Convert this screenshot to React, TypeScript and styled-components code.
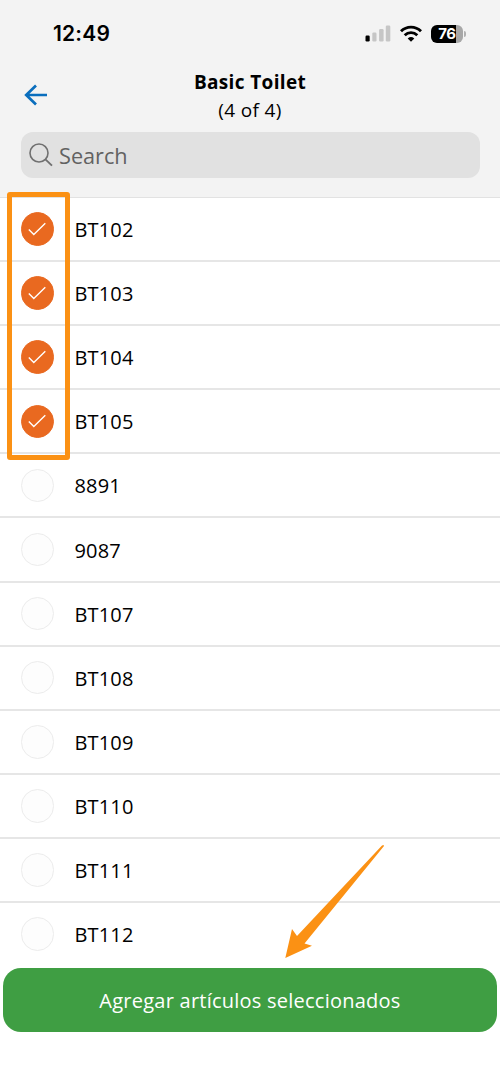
import React from 'react';
import styled, { createGlobalStyle } from 'styled-components';

const GlobalStyle = createGlobalStyle`
  *, *::before, *::after { box-sizing: border-box; }
  body { margin: 0; background: #fff; font-family: 'Open Sans', 'Noto Sans', sans-serif; color: #000; }
`;

const Screen = styled.main`
  position: relative;
  display: flex;
  flex-direction: column;
  width: 500px;
  height: 1082px;
  overflow: hidden;
  background: #fff;
`;

const Header = styled.header`
  flex: none;
  height: 198px;
  background: #f3f3f3;
  border-bottom: 1px solid #e2e2e2;
`;

const StatusBar = styled.div`
  display: flex;
  align-items: center;
  justify-content: space-between;
  height: 67px;
  padding: 0 34px 0 53px;
`;

const Clock = styled.time`
  font: 600 21px/24px Inter, sans-serif;
  letter-spacing: 0.2px;
`;

const StatusIcons = styled.div`
  display: flex;
  align-items: center;
  gap: 9px;
`;

const Battery = styled.div`
  display: flex;
  align-items: center;
  gap: 1px;
`;

const BatteryBody = styled.div`
  width: 32px;
  height: 18px;
  border-radius: 6px;
  background: linear-gradient(to right, #000 0 25px, #a7a7a7 25px);
  color: #fff;
  font: 700 15px/18px Inter, sans-serif;
  letter-spacing: -0.4px;
  text-align: center;
`;

const BatteryCap = styled.div`
  width: 2px;
  height: 6px;
  border-radius: 0 2px 2px 0;
  background: #b0b0b0;
`;

const TitleBar = styled.div`
  display: grid;
  grid-template-columns: 60px 1fr 60px;
  align-items: center;
  height: 65px;
  padding: 0 0 9px;
`;

const BackButton = styled.button`
  display: flex;
  padding: 0 0 1px 24px;
  border: 0;
  background: none;
`;

const Title = styled.h1`
  margin: 0;
  padding-top: 1px;
  font-size: 19px;
  font-weight: 700;
  line-height: 28px;
  letter-spacing: 0.35px;
  text-align: center;
`;

const Count = styled.span`
  display: block;
  font-weight: 400;
`;

const SearchBox = styled.label`
  display: flex;
  align-items: center;
  gap: 6px;
  height: 46px;
  margin: 0 20.5px;
  padding: 0 8.5px;
  border-radius: 12px;
  background: #e1e1e1;
  color: #626262;
  font-size: 21.7px;
  line-height: 30px;
`;

const Placeholder = styled.span`
  padding-top: 2px;
`;

const List = styled.ul`
  flex: none;
  height: 770px;
  margin: 0;
  padding: 0;
  overflow: hidden;
  list-style: none;
`;

const Row = styled.li`
  display: flex;
  align-items: center;
  gap: 20.5px;
  height: 64.1px;
  padding: 0 20.5px;
  border-bottom: 2px solid #e6e6e6;

  &:last-child {
    border-bottom-color: transparent;
  }
`;

const ItemName = styled.span`
  padding-top: 2px;
  font-size: 20px;
  line-height: 28px;
  letter-spacing: 0.15px;
`;

const Check = styled.span<{ $on: boolean }>`
  display: flex;
  align-items: center;
  justify-content: center;
  width: 33.5px;
  height: 33.5px;
  border: 1px solid ${(p) => (p.$on ? '#e96920' : '#ececec')};
  border-radius: 50%;
  background: ${(p) => (p.$on ? '#e96920' : '#fdfdfd')};
`;

const AddButton = styled.button`
  flex: none;
  height: 64px;
  margin: 0 3px;
  padding: 2px 0 0;
  border: 0;
  border-radius: 18px;
  background: #3f9e43;
  color: #fff;
  font: 400 20px/28px 'Open Sans', sans-serif;
  letter-spacing: 0.24px;
`;

const Highlight = styled.div`
  position: absolute;
  left: 6.5px;
  top: 192px;
  width: 63px;
  height: 268px;
  border: 5px solid #fb9114;
  border-radius: 3px;
`;

const Pointer = styled.svg`
  position: absolute;
  left: 280px;
  top: 840px;
`;

const items = ['BT102', 'BT103', 'BT104', 'BT105', '8891', '9087', 'BT107', 'BT108', 'BT109', 'BT110', 'BT111', 'BT112'];
const selected = new Set(['BT102', 'BT103', 'BT104', 'BT105']);

export default function App() {
  return (
    <Screen>
      <GlobalStyle />
      <Header>
        <StatusBar>
          <Clock>12:49</Clock>
          <StatusIcons>
            <svg width="26" height="17" viewBox="0 0 26 17">
              <rect x="0.5" y="10.5" width="4.2" height="6" rx="1.2" />
              <rect x="7.3" y="7.5" width="4.2" height="9" rx="1.2" fill="#c6c6c6" />
              <rect x="14.1" y="4" width="4.5" height="12.5" rx="1.2" fill="#c6c6c6" />
              <rect x="20.8" y="0.5" width="4.5" height="16" rx="1.2" fill="#c6c6c6" />
            </svg>
            <svg width="22" height="17" viewBox="0 0 22 17" fill="none" stroke="#000" strokeWidth="2.9">
              <path d="M1 6.2C6.6.7 15.4.7 21 6.2" />
              <path d="M4.7 10.2C8.3 6.8 13.7 6.8 17.3 10.2" />
              <path d="M11 16.7 7.7 13.4Q11 10.7 14.3 13.4Z" fill="#000" stroke="none" />
            </svg>
            <Battery>
              <BatteryBody>76</BatteryBody>
              <BatteryCap />
            </Battery>
          </StatusIcons>
        </StatusBar>
        <TitleBar>
          <BackButton aria-label="Back">
            <svg width="24" height="22" viewBox="0 0 24 22" fill="none" stroke="#0a6ebd" strokeWidth="2.7">
              <path d="M2.2 11H23M12 1.5 2.2 11 12 20.5" />
            </svg>
          </BackButton>
          <Title>
            Basic Toilet
            <Count>(4 of 4)</Count>
          </Title>
        </TitleBar>
        <SearchBox>
          <svg width="24" height="24" viewBox="0 0 24 24" fill="none" stroke="#707070" strokeWidth="1.6">
            <circle cx="10" cy="10" r="9" />
            <path d="m16.4 16.4 6.6 6.2" strokeWidth="1.9" />
          </svg>
          <Placeholder>Search</Placeholder>
        </SearchBox>
      </Header>
      <List>
        {items.map((item) => (
          <Row key={item}>
            <Check $on={selected.has(item)}>
              {selected.has(item) && (
                <svg width="18" height="14" viewBox="0 0 18 14" fill="none" stroke="#fff" strokeWidth="1.4">
                  <path d="m.8 7.5 5 5L17.3 1.2" />
                </svg>
              )}
            </Check>
            <ItemName>{item}</ItemName>
          </Row>
        ))}
      </List>
      <AddButton>Agregar artículos seleccionados</AddButton>
      <Highlight />
      <Pointer width="110" height="124" viewBox="280 840 110 124">
        <path
          d="M383.5 845 382 845.5 297 936 292 929 285.3 958 312 945.7 304.5 943.5 384 846Z"
          fill="#fb9114"
        />
      </Pointer>
    </Screen>
  );
}
